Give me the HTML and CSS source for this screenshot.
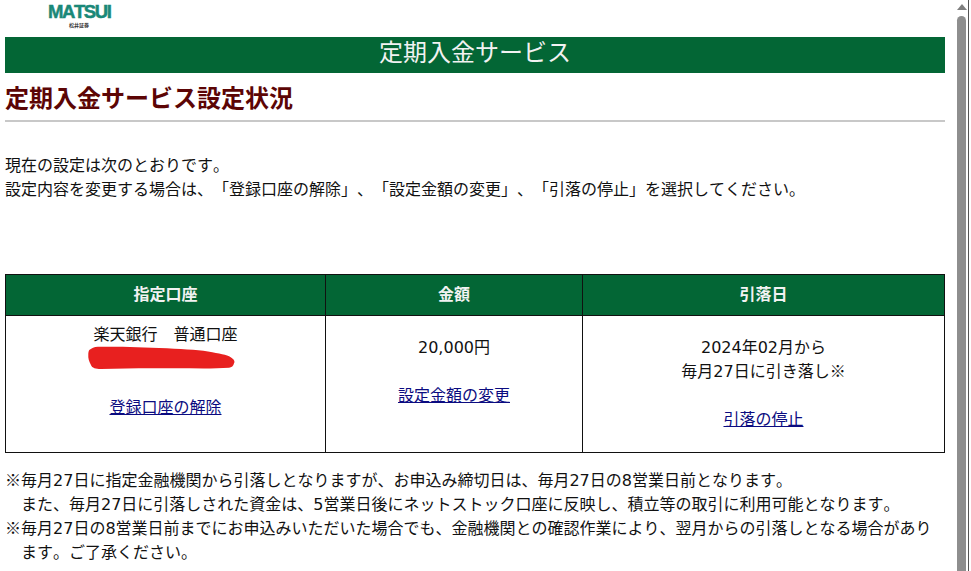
FILE: index.html
```html
<!DOCTYPE html>
<html lang="ja">
<head>
<meta charset="utf-8">
<title>定期入金サービス</title>
<link rel="stylesheet" href="styles.css">
</head>
<body>
<div class="window">
  <main class="page">
    <div class="logo">
      <div class="logo-name">MATSUI</div>
      <div class="logo-sub">松井証券</div>
    </div>
    <h1 class="banner">定期入金サービス</h1>
    <h2 class="title">定期入金サービス設定状況</h2>
    <p class="intro">現在の設定は次のとおりです。<br>設定内容を変更する場合は、「登録口座の解除」、「設定金額の変更」、「引落の停止」を選択してください。</p>
    <table class="settings">
      <colgroup><col class="c1"><col class="c2"><col class="c3"></colgroup>
      <thead>
        <tr><th>指定口座</th><th>金額</th><th>引落日</th></tr>
      </thead>
      <tbody>
        <tr>
          <td class="account">
            楽天銀行　普通口座
            <svg class="scribble" width="148" height="24" viewBox="0 0 150 24" preserveAspectRatio="none"><path d="M1.3 4 C4 2 6 1 10 0.7 C35 0.5 55 1 80 2.3 C100 3.5 115 4 126 6.3 C136 8 143 9.5 146 12.3 C148.5 14 149 16 148 17.3 C147.5 20 145.5 21.5 143 21.7 C125 23 100 22 80 22.3 C55 22 35 22.5 13 23 C8 23 4 22 3 19 C1 15 0 12 0.3 9 C0.3 7 0.5 5 1.3 4Z" fill="#e8201f"/></svg>
            <a class="link gap-a" href="#">登録口座の解除</a>
          </td>
          <td>
            <div>20,000円</div>
            <a class="link gap-b" href="#">設定金額の変更</a>
          </td>
          <td>
            <div>2024年02月から<br>毎月27日に引き落し<span class="mark">※</span></div>
            <a class="link gap-b" href="#">引落の停止</a>
          </td>
        </tr>
      </tbody>
    </table>
    <ul class="notes">
      <li><span class="mark">※</span>毎月27日に指定金融機関から引落しとなりますが、お申込み締切日は、毎月27日の8営業日前となります。<br>また、毎月27日に引落しされた資金は、5営業日後にネットストック口座に反映し、積立等の取引に利用可能となります。</li>
      <li><span class="mark">※</span>毎月27日の8営業日前までにお申込みいただいた場合でも、金融機関との確認作業により、翌月からの引落しとなる場合があります。ご了承ください。</li>
    </ul>
  </main>
  <aside class="scrollbar">
    <svg class="arrow" width="10" height="6" viewBox="0 0 10 6"><path d="M5 0 L10 6 L0 6Z" fill="#7f7f7f"/></svg>
    <div class="thumb"></div>
  </aside>
</div>
</body>
</html>
```
FILE: styles.css
```css
html, body {
  margin: 0;
  height: 100%;
  overflow: hidden;
  background: #fff;
}
body {
  font-family: "DejaVu Sans", "Noto Sans CJK JP", sans-serif;
  font-size: 16px;
  line-height: 24px;
  color: #111;
  text-spacing-trim: space-all;
  font-kerning: none;
}
.window {
  display: flex;
  height: 571px;
}
.page {
  width: 940px;
  margin-left: 5px;
  flex: none;
}
.mark {
  font-family: "Noto Sans CJK JP", sans-serif;
  line-height: 0;
}
.logo {
  height: 37px;
  padding-left: 43px;
  box-sizing: border-box;
}
.logo-name {
  width: 62px;
  height: 19px;
  padding-top: 2px;
  font-family: "Liberation Sans", sans-serif;
  font-weight: 700;
  font-size: 18.5px;
  line-height: 19px;
  color: #1a8878;
  letter-spacing: -1.4px;
  -webkit-text-stroke: 0.5px #1a8878;
  white-space: nowrap;
}
.logo-sub {
  width: 62px;
  font-family: "Noto Sans CJK JP", sans-serif;
  font-size: 5px;
  line-height: 7px;
  font-weight: 700;
  color: #333;
  text-align: center;
}
.banner {
  margin: 0;
  height: 36px;
  background: #036635;
  color: #f2f2f2;
  font-size: 24px;
  font-weight: 400;
  line-height: 33px;
  text-align: center;
}
.title {
  margin: 0;
  padding: 12px 0 6px;
  font-size: 24px;
  line-height: 29px;
  font-weight: 700;
  color: #5c0505;
  border-bottom: 2px solid #c8c8c8;
}
.intro {
  margin: 32px 0 0;
}
.settings {
  margin-top: 72px;
  width: 940px;
  border-collapse: collapse;
  table-layout: fixed;
  background: #fff;
}
.c1 { width: 320px; }
.c2 { width: 257px; }
.settings th, .settings td {
  border: 1px solid #111;
  text-align: center;
  padding: 0;
  box-sizing: border-box;
}
.settings th {
  height: 41px;
  background: #036635;
  color: #f2f2f2;
  font-size: 16px;
  line-height: 22px;
  font-weight: 700;
}
.settings td {
  height: 137px;
  vertical-align: top;
  padding-top: 20px;
}
.settings td.account {
  padding-top: 7px;
}
.scribble {
  display: block;
  margin: -1px 0 0 82px;
}
.link {
  display: block;
  color: #0b0b80;
  text-decoration: underline;
}
.gap-a { margin-top: 26px; }
.gap-b { margin-top: 24px; }
.notes {
  list-style: none;
  margin: 16px 0 0;
  padding: 0 8px 0 0;
}
.notes li {
  padding-left: 16px;
  text-indent: -16px;
}
.scrollbar {
  flex: none;
  width: 13px;
  margin-left: 10px;
  border-right: 1px solid #555;
  background: #fff;
  display: flex;
  flex-direction: column;
  align-items: center;
  padding-top: 4px;
}
.arrow { flex: none; }
.thumb {
  margin-top: 6px;
  width: 9px;
  flex: 1;
  background: #8e8e8e;
  border-radius: 5px 5px 0 0;
}
```
